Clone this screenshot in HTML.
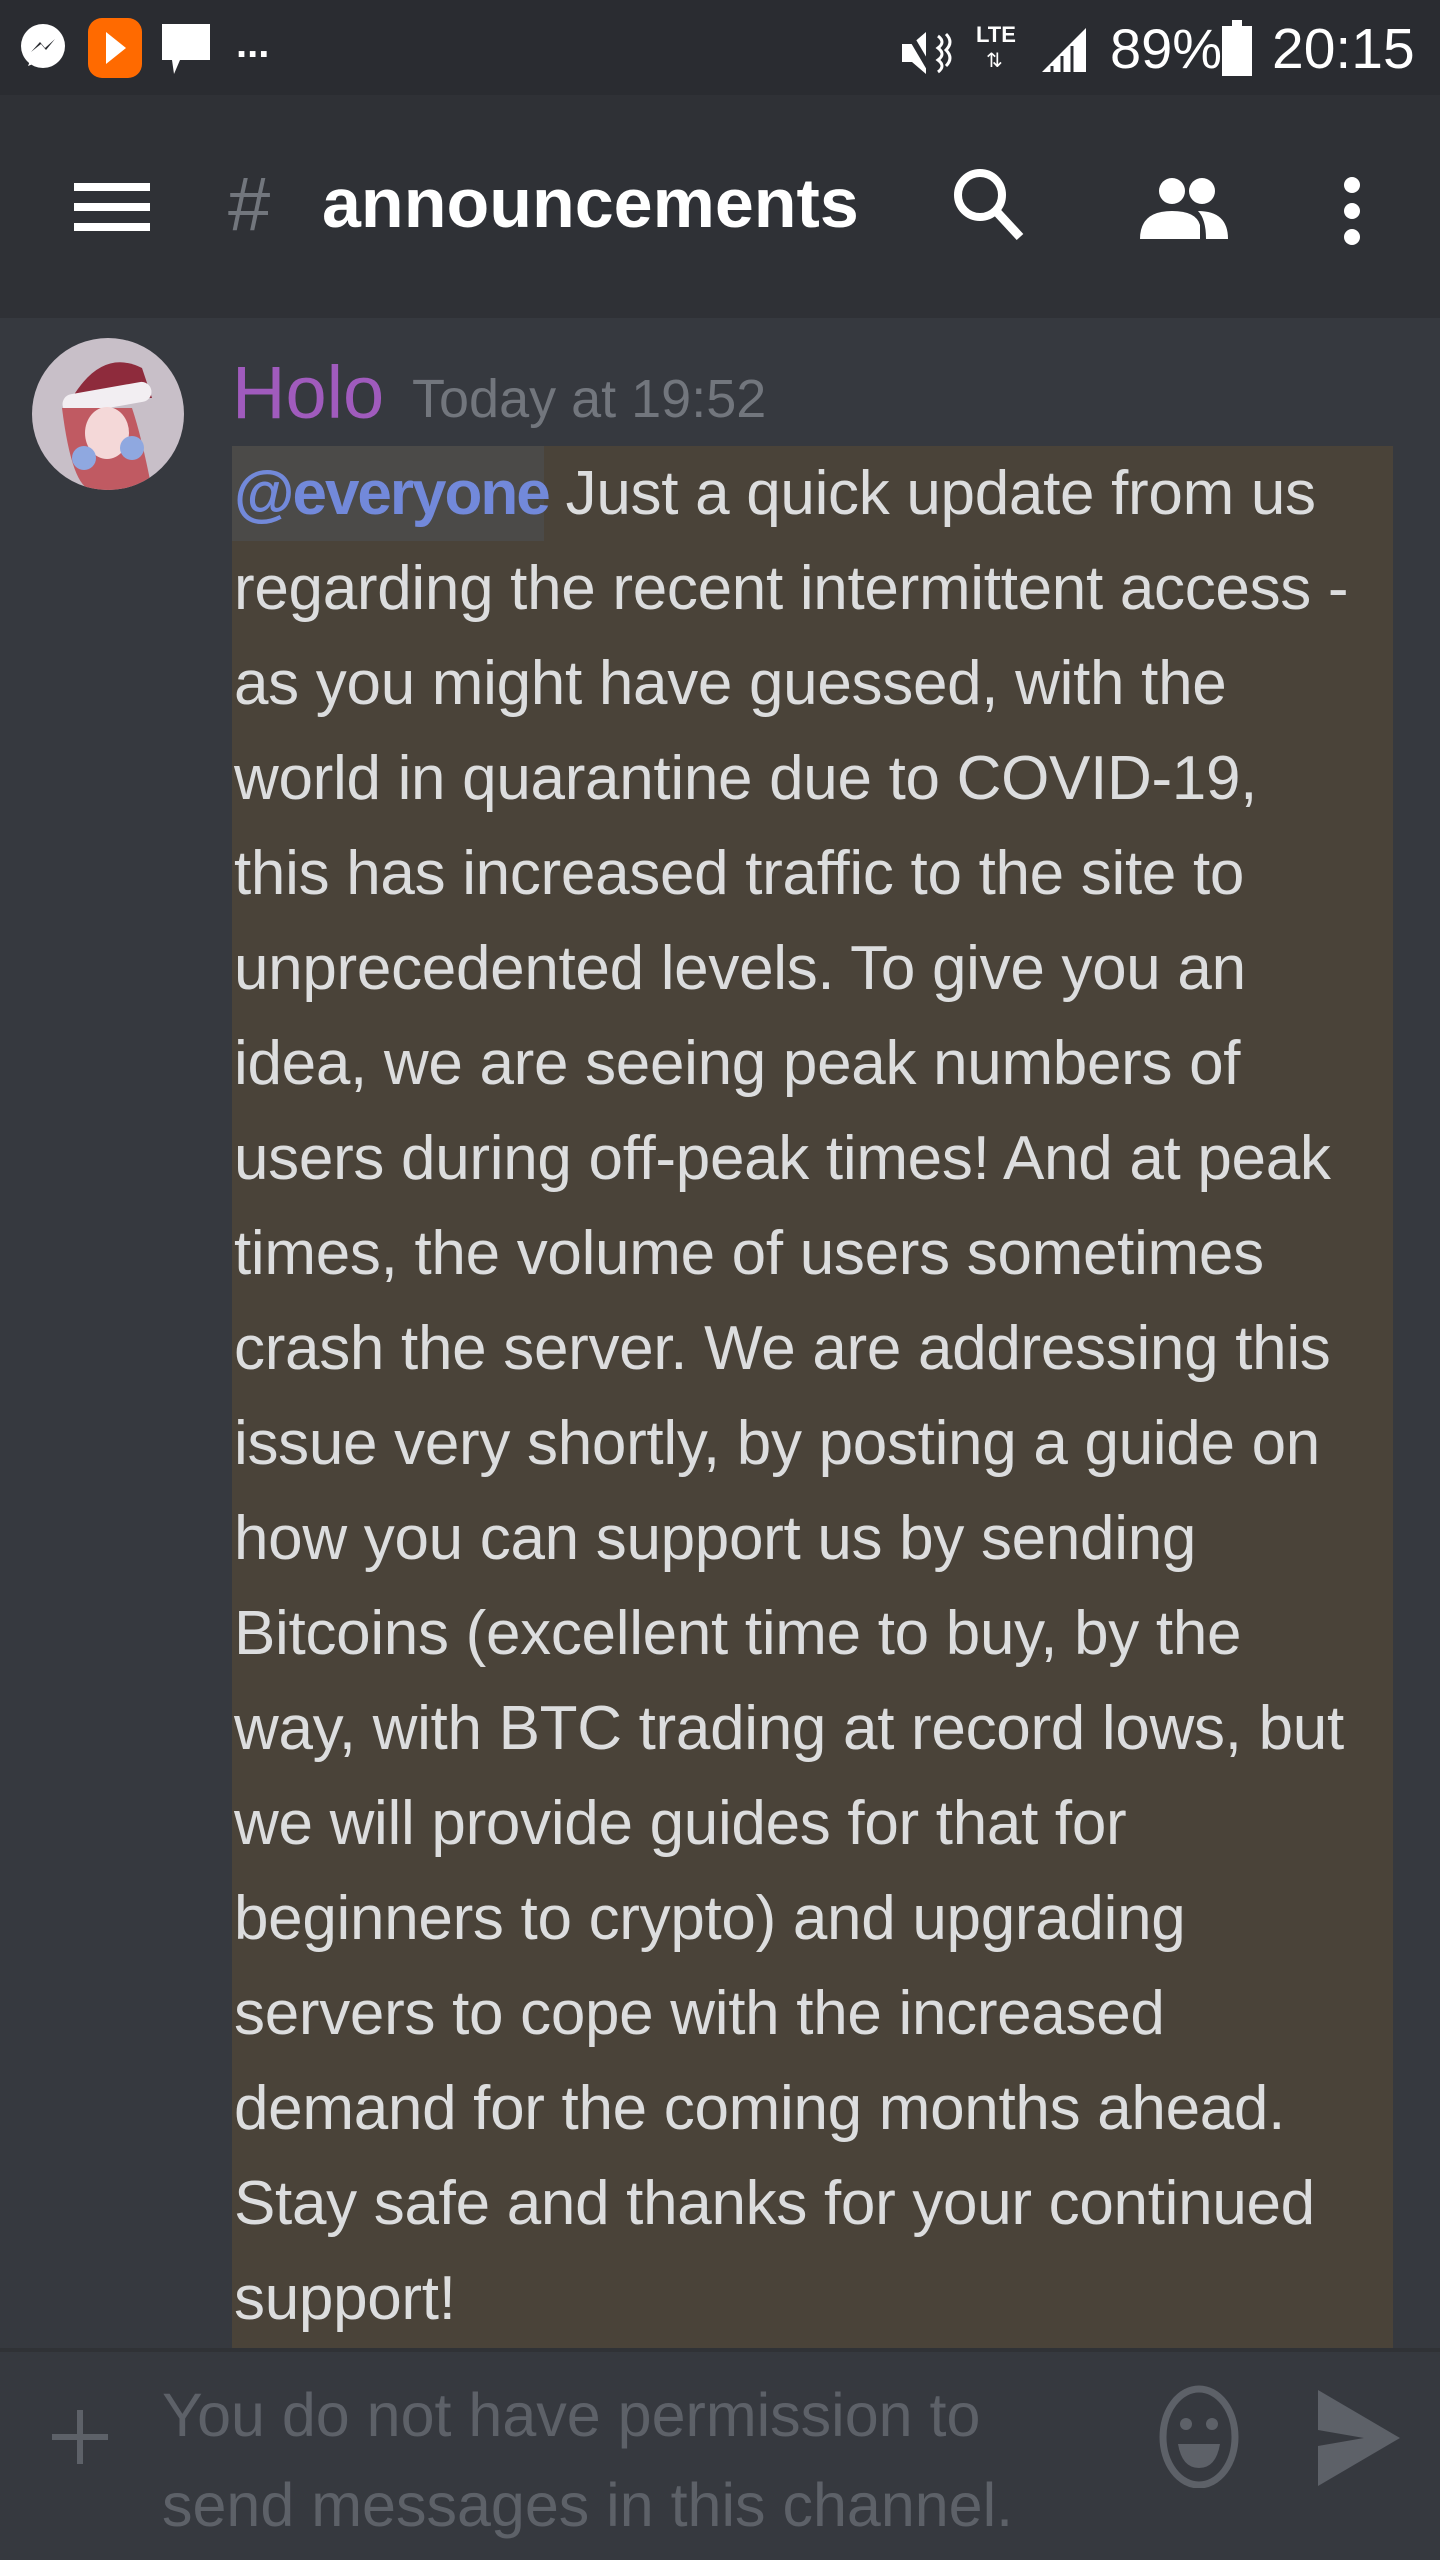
<!DOCTYPE html>
<html><head><meta charset="utf-8"><style>
*{margin:0;padding:0;box-sizing:border-box}
body{width:1440px;height:2560px;background:#36393f;font-family:"Liberation Sans",sans-serif;position:relative;overflow:hidden}
.abs{position:absolute}
#status{left:0;top:0;width:1440px;height:95px;background:#2a2c31}
#header{left:0;top:95px;width:1440px;height:223px;background:#2f3136}
.line{position:absolute;left:234px;height:95px;line-height:95px;font-size:62px;color:#dcddde;white-space:nowrap;letter-spacing:-0.3px}
#hl{left:232px;top:446px;width:1161px;height:1902px;background:#4a4339}
#ev{left:232px;top:446px;width:312px;height:95px;background:#4b4a48}
#input{left:0;top:2348px;width:1440px;height:212px;background:#36393f;border-top:4px solid #303236}
.ph{position:absolute;left:162px;font-size:61px;color:#5d6168;white-space:nowrap;letter-spacing:0}
</style></head><body>
<div id="status" class="abs">
 <svg class="abs" style="left:18px;top:22px" width="50" height="52" viewBox="0 0 50 52"><circle cx="25" cy="24" r="22" fill="#fff"/><path d="M10 44 L14 34 L20 40Z" fill="#fff"/><path d="M13 30 L22 20 L27 26 L37 17 L28 28 L23 22Z" fill="#2a2c31"/></svg>
 <div class="abs" style="left:88px;top:18px;width:54px;height:60px;background:#ff6a00;border-radius:14px"></div>
 <svg class="abs" style="left:100px;top:28px" width="30" height="40"><path d="M6 4 L26 20 L6 36Z" fill="#fff"/></svg>
 <svg class="abs" style="left:160px;top:22px" width="56" height="56"><path d="M2 2 H50 V38 H20 L14 52 L12 38 H2Z" fill="#fff"/></svg>
 <div class="abs" style="left:236px;top:22px;color:#fff;font-size:40px;font-weight:bold">...</div>
 <svg class="abs" style="left:900px;top:28px" width="60" height="50"><path d="M2 16 H12 L26 4 V46 L12 34 H2Z" fill="#fff"/><path d="M8 4 L34 48" stroke="#2a2c31" stroke-width="6"/><path d="M38 8 Q46 14 38 20 Q46 26 38 32 Q46 38 38 44 M46 6 Q54 14 46 22 Q54 30 46 38" stroke="#fff" stroke-width="3" fill="none"/></svg>
 <div class="abs" style="left:976px;top:22px;color:#fff;font-size:22px;font-weight:bold">LTE</div>
 <div class="abs" style="left:986px;top:48px;color:#fff;font-size:20px">⇅</div>
 <svg class="abs" style="left:1040px;top:26px" width="50" height="50"><path d="M2 46 L46 2 V46Z" fill="#fff"/><path d="M12 46 V40 M22 46 V30 M32 46 V20" stroke="#2a2c31" stroke-width="3"/></svg>
 <div class="abs" style="left:1110px;top:16px;color:#fff;font-size:56px">89%</div>
 <div class="abs" style="left:1222px;top:26px;width:30px;height:50px;background:#fff"></div>
 <div class="abs" style="left:1232px;top:20px;width:10px;height:8px;background:#fff"></div>
 <div class="abs" style="left:1272px;top:16px;color:#fff;font-size:57px">20:15</div>
</div>
<div id="header" class="abs">
 <div class="abs" style="left:74px;top:88px;width:76px;height:8px;background:#fff"></div>
 <div class="abs" style="left:74px;top:108px;width:76px;height:8px;background:#fff"></div>
 <div class="abs" style="left:74px;top:128px;width:76px;height:8px;background:#fff"></div>
 <div class="abs" style="left:228px;top:66px;color:#72767d;font-size:76px">#</div>
 <div class="abs" style="left:322px;top:68px;color:#fff;font-size:70px;font-weight:bold;letter-spacing:0">announcements</div>
 <svg class="abs" style="left:950px;top:68px" width="90" height="90"><circle cx="30" cy="32" r="22" stroke="#fff" stroke-width="8" fill="none"/><path d="M46 48 L70 74" stroke="#fff" stroke-width="9"/></svg>
 <svg class="abs" style="left:1136px;top:80px" width="100" height="70"><circle cx="36" cy="16" r="13" fill="#fff"/><circle cx="66" cy="16" r="13" fill="#fff"/><path d="M4 64 Q4 36 36 36 Q60 36 64 50 V64Z" fill="#fff"/><path d="M62 36 Q92 36 92 64 H70 Q70 44 62 36Z" fill="#fff"/></svg>
 <div class="abs" style="left:1344px;top:82px;width:16px;height:16px;border-radius:50%;background:#fff"></div>
 <div class="abs" style="left:1344px;top:108px;width:16px;height:16px;border-radius:50%;background:#fff"></div>
 <div class="abs" style="left:1344px;top:134px;width:16px;height:16px;border-radius:50%;background:#fff"></div>
</div>
<svg class="abs" style="left:32px;top:338px" width="152" height="152"><defs><clipPath id="c"><circle cx="76" cy="76" r="76"/></clipPath></defs><g clip-path="url(#c)"><rect width="152" height="152" fill="#c8bfc8"/><path d="M40 60 Q70 10 110 30 L120 60Z" fill="#8e2b3c"/><rect x="30" y="50" width="90" height="20" rx="10" fill="#f2eef2" transform="rotate(-10 75 60)"/><path d="M30 70 Q40 150 60 152 L120 152 Q110 100 100 70Z" fill="#c05a62"/><ellipse cx="75" cy="95" rx="22" ry="26" fill="#f4d8d8"/><circle cx="52" cy="120" r="12" fill="#8fa8e0"/><circle cx="100" cy="110" r="12" fill="#8fa8e0"/></g></svg>
<div class="abs" style="left:232px;top:350px;color:#a05bbd;font-size:74px">Holo</div>
<div class="abs" style="left:412px;top:368px;color:#72767d;font-size:54px">Today at 19:52</div>
<div id="hl" class="abs"></div>
<div id="ev" class="abs"></div>
<div class="line" style="top:446px"><span style="color:#7289da;font-weight:bold;letter-spacing:-2px">@everyone</span> Just a quick update from us</div>
<div class="line" style="top:541px">regarding the recent intermittent access -</div>
<div class="line" style="top:636px">as you might have guessed, with the</div>
<div class="line" style="top:731px">world in quarantine due to COVID-19,</div>
<div class="line" style="top:826px">this has increased traffic to the site to</div>
<div class="line" style="top:921px">unprecedented levels. To give you an</div>
<div class="line" style="top:1016px">idea, we are seeing peak numbers of</div>
<div class="line" style="top:1111px">users during off-peak times! And at peak</div>
<div class="line" style="top:1206px">times, the volume of users sometimes</div>
<div class="line" style="top:1301px">crash the server. We are addressing this</div>
<div class="line" style="top:1396px">issue very shortly, by posting a guide on</div>
<div class="line" style="top:1491px">how you can support us by sending</div>
<div class="line" style="top:1586px">Bitcoins (excellent time to buy, by the</div>
<div class="line" style="top:1681px">way, with BTC trading at record lows, but</div>
<div class="line" style="top:1776px">we will provide guides for that for</div>
<div class="line" style="top:1871px">beginners to crypto) and upgrading</div>
<div class="line" style="top:1966px">servers to cope with the increased</div>
<div class="line" style="top:2061px">demand for the coming months ahead.</div>
<div class="line" style="top:2156px">Stay safe and thanks for your continued</div>
<div class="line" style="top:2251px">support!</div>
<div id="input" class="abs">
 <div class="abs" style="left:52px;top:82px;width:56px;height:6px;background:#5d6168"></div>
 <div class="abs" style="left:77px;top:58px;width:6px;height:54px;background:#5d6168"></div>
 <div class="ph" style="top:28px">You do not have permission to</div>
 <div class="ph" style="top:118px">send messages in this channel.</div>
 <svg class="abs" style="left:1156px;top:30px" width="86" height="106"><ellipse cx="43" cy="55" rx="36" ry="48" stroke="#5d6168" stroke-width="7" fill="none"/><circle cx="30" cy="42" r="6" fill="#5d6168"/><circle cx="56" cy="42" r="6" fill="#5d6168"/><path d="M22 62 H64 Q60 86 43 86 Q26 86 22 62Z" fill="#5d6168"/></svg>
 <svg class="abs" style="left:1316px;top:36px" width="90" height="100"><path d="M2 2 L84 50 L2 98 L2 58 L48 50 L2 42Z" fill="#5d6168"/></svg>
</div>
</body></html>
